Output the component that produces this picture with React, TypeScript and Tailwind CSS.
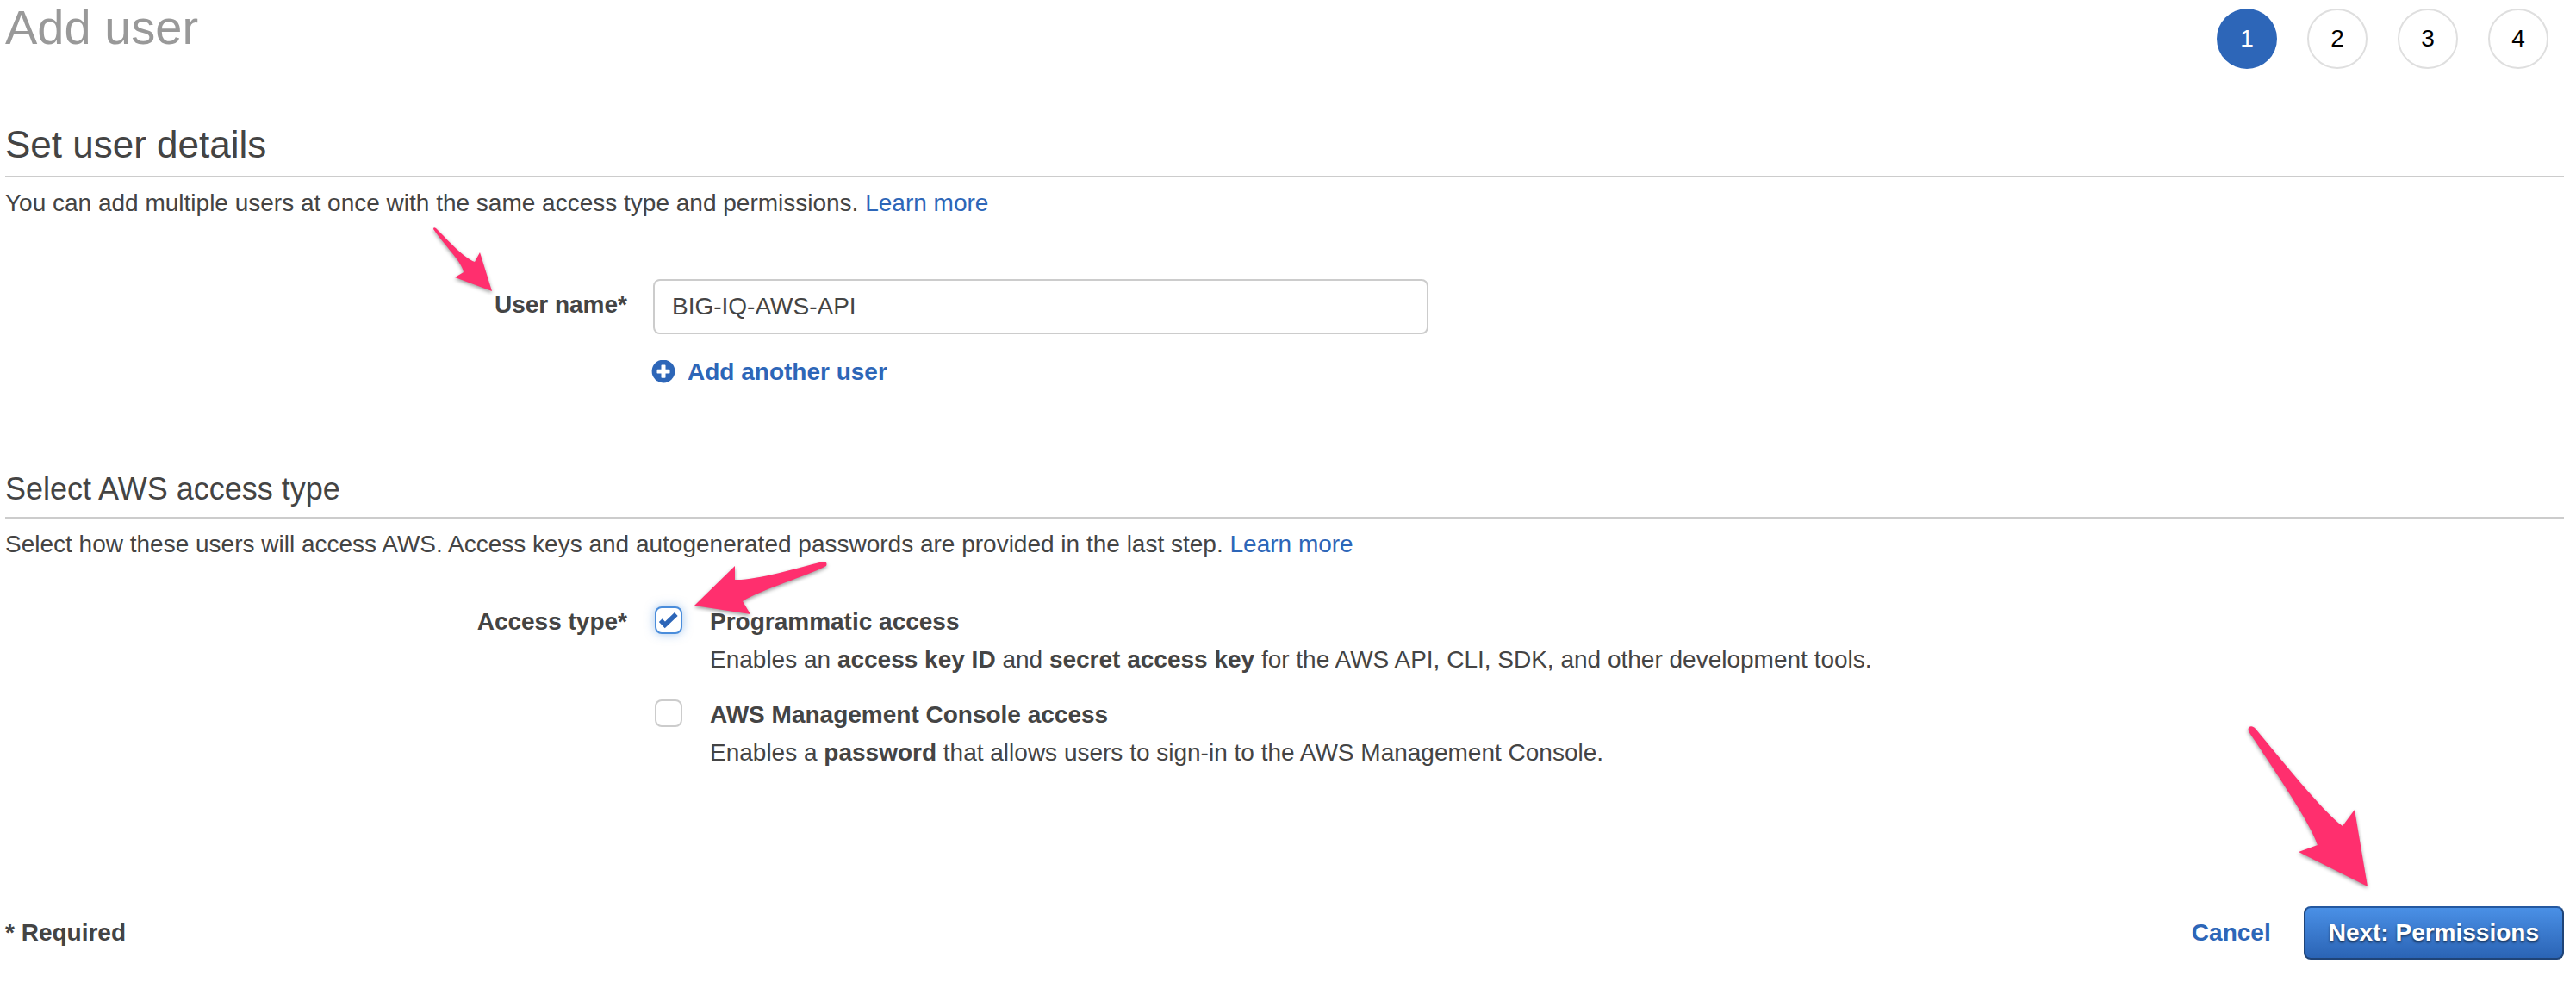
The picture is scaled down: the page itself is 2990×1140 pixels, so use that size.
import { useState } from "react";

const link = "text-[#2d66b8] hover:underline";

function Steps() {
  return (
    <ol className="flex gap-[35px] pr-[18px]">
      {[1, 2, 3, 4].map((n) => (
        <li
          key={n}
          aria-current={n === 1 ? "step" : undefined}
          className={
            n === 1
              ? "flex size-[70px] items-center justify-center rounded-full bg-[#2d66b8] text-white"
              : "flex size-[70px] items-center justify-center rounded-full border-2 border-[#dfdfdf] text-black"
          }
        >
          {n}
        </li>
      ))}
    </ol>
  );
}

function PlusIcon() {
  return (
    <svg aria-hidden="true" viewBox="0 0 28 28" className="size-7 shrink-0">
      <circle cx="14" cy="13" r="13.4" fill="#2d66b8" />
      <path d="M12.3 5.5h3.4q.8 0 .8.8v4.4h4.2q.8 0 .8.8v3.2q0 .8-.8.8h-4.2v4.4q0 .8-.8.8h-3.4q-.8 0-.8-.8v-4.4H7.3q-.8 0-.8-.8v-3.2q0-.8.8-.8h4.2V6.300q0-.8.8-.8z" fill="#fff" />
    </svg>
  );
}

function Check({ id, checked, onChange }: { id: string; checked: boolean; onChange: () => void }) {
  return (
    <span className="relative mt-1 size-8 shrink-0">
      <input
        id={id}
        type="checkbox"
        checked={checked}
        onChange={onChange}
        className="block size-8 appearance-none rounded-lg border-2 border-[#ccc] bg-white checked:border-[#4a8ddb] checked:shadow-[0_0_12px_rgba(74,141,219,0.5)]"
      />
      {checked && (
        <svg aria-hidden="true" viewBox="0 0 32 32" className="pointer-events-none absolute inset-0 size-8">
          <path d="M6.800 16.200 11.800 21.400 24.800 9" fill="none" stroke="#2d66b8" strokeWidth="5.4" />
        </svg>
      )}
    </span>
  );
}

function Arrow({ d, box, className }: { d: string; box: string; className: string }) {
  return (
    <svg
      aria-hidden="true"
      viewBox={box}
      className={"pointer-events-none absolute overflow-visible drop-shadow-[0_2px_2px_rgba(0,0,0,0.4)] " + className}
    >
      <path d={d} fill="#ff2f6e" />
    </svg>
  );
}

export default function App() {
  const [name, setName] = useState("BIG-IQ-AWS-API");
  const [programmatic, setProgrammatic] = useState(true);
  const [consoleAccess, setConsoleAccess] = useState(false);

  return (
    <main className="bg-white pr-3.5 pl-1.5 font-['Liberation_Sans',Arial,sans-serif] text-[28px] leading-10 text-[#444]">
      <header className="flex items-start justify-between pt-2.5">
        <h1 className="-mt-2.5 text-[56px] leading-16 text-[#999]">Add user</h1>
        <Steps />
      </header>

      <section className="pt-[62px]">
        <h2 className="border-b-2 border-[#ccc] pb-2.5 text-[44px] leading-[52px]">Set user details</h2>
        <p className="pt-2.5">
          You can add multiple users at once with the same access type and permissions.{" "}
          <a href="#users" className={link}>Learn more</a>
        </p>

        <div className="grid grid-cols-[722px_900px] gap-x-[30px] pt-[68px]">
          <div className="pt-2.5 text-right">
            <span className="relative inline-block">
              <label htmlFor="user-name" className="font-bold">User name*</label>
              <Arrow
                box="0 0 72 75"
                className="right-full bottom-9 h-[75px] w-[72px]"
                d="M1 3Q1 0 4 2C20 18 36 36 49 41L55 30 69 75 26 59 36 53C35 42 14 22 1 3Z"
              />
            </span>
          </div>
          <div>
            <input
              id="user-name"
              type="text"
              value={name}
              onChange={(e) => setName(e.target.value)}
              className="block h-16 w-full rounded-lg border-2 border-[#ccc] px-5"
            />
            <button type="button" className="mt-6 -ml-0.5 flex items-center gap-3.5 font-bold text-[#2d66b8]">
              <PlusIcon />
              Add another user
            </button>
          </div>
        </div>
      </section>

      <section className="pt-[94px]">
        <h3 className="border-b-2 border-[#ccc] pb-2.5 text-4xl leading-11">Select AWS access type</h3>
        <p className="pt-2.5">
          Select how these users will access AWS. Access keys and autogenerated passwords are provided in the last step.{" "}
          <a href="#access" className={link}>Learn more</a>
        </p>

        <fieldset className="grid grid-cols-[722px_1fr] gap-x-8 pt-12 leading-11" aria-labelledby="access-type">
          <div id="access-type" className="text-right font-bold">Access type*</div>
          <div className="flex flex-col gap-5">
            <div className="relative flex items-start gap-8">
              <Check id="programmatic" checked={programmatic} onChange={() => setProgrammatic(!programmatic)} />
              <div>
                <label htmlFor="programmatic" className="block font-bold">Programmatic access</label>
                <p>
                  Enables an <b>access key ID</b> and <b>secret access key</b> for the AWS API, CLI, SDK, and other development tools.
                </p>
              </div>
              <Arrow
                box="0 0 154 62"
                className="-top-12 left-[46px] h-[62px] w-[154px]"
                d="M0 51 47 5 47 21C70 22 118 8 149 0Q155 0 153 5C130 17 78 32 56 46L65 61Z"
              />
            </div>
            <div className="flex items-start gap-8">
              <Check id="console" checked={consoleAccess} onChange={() => setConsoleAccess(!consoleAccess)} />
              <div>
                <label htmlFor="console" className="block font-bold">AWS Management Console access</label>
                <p>
                  Enables a <b>password</b> that allows users to sign-in to the AWS Management Console.
                </p>
              </div>
            </div>
          </div>
        </fieldset>
      </section>

      <footer className="flex items-center justify-between pt-[156px] pb-6 font-bold">
        <span>* Required</span>
        <div className="flex items-center gap-[38px]">
          <button type="button" className="text-[#2d66b8]">Cancel</button>
          <div className="relative">
            <button
              type="button"
              className="block h-[62px] rounded-lg border-2 border-[#1f4478] border-t-[#2458a0] bg-linear-to-b from-[#4a90e6] to-[#2b64b5] px-[27px] text-white [text-shadow:0_2px_3px_rgba(0,0,0,0.6)]"
            >
              Next: Permissions
            </button>
            <Arrow
              box="0 0 140 186"
              className="right-[227px] bottom-[85px] h-[186px] w-[140px]"
              d="M1 6C-1 0 5-2 9 3C40 40 86 98 110 116L124 97 139 186 59 146 81 138C74 114 30 50 1 6Z"
            />
          </div>
        </div>
      </footer>
    </main>
  );
}
